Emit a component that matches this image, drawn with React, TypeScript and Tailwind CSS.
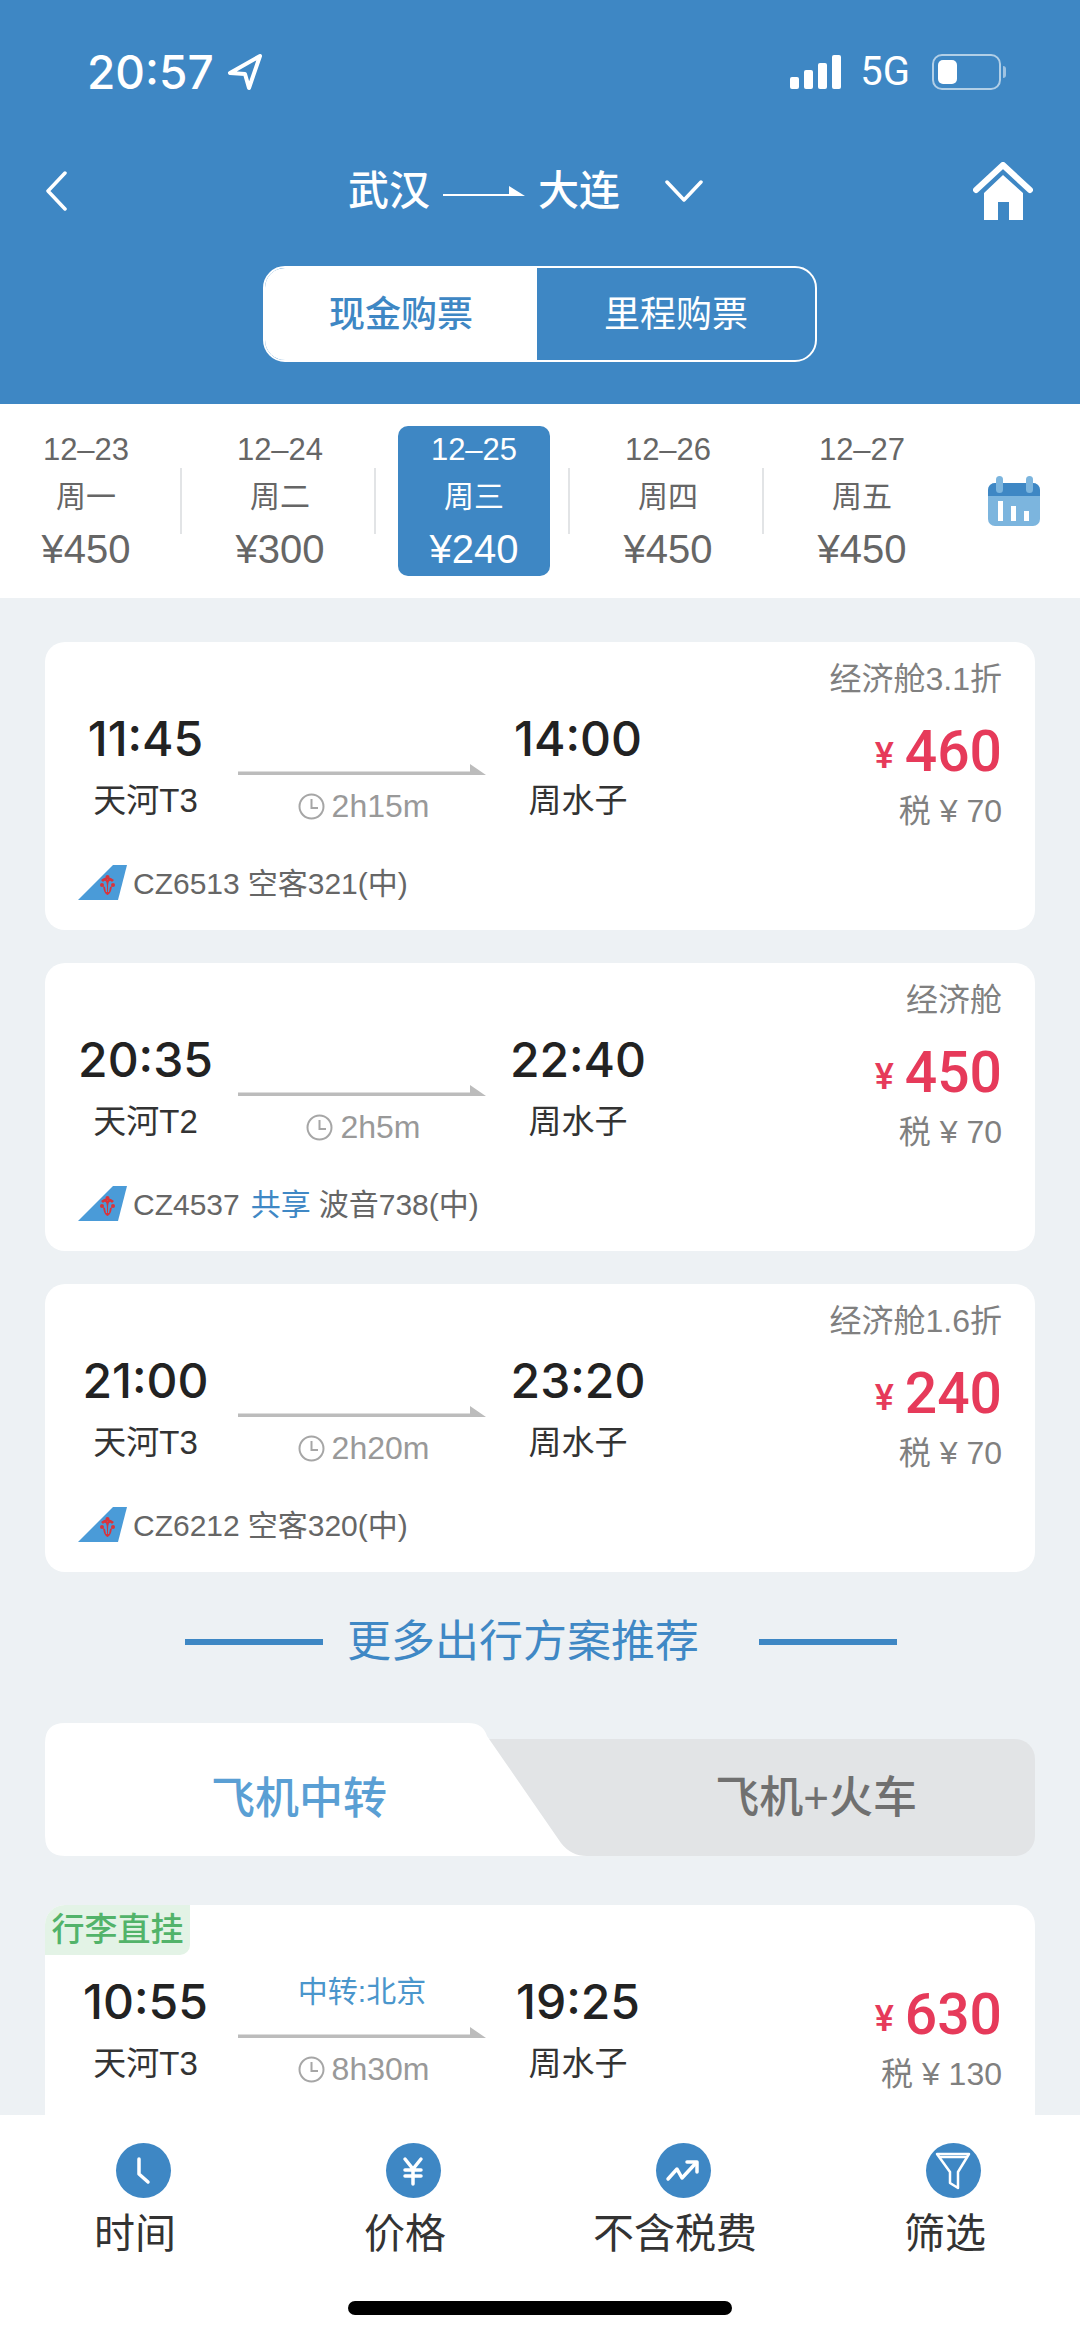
import { ReactNode } from 'react';

type Flight = {
  dep: string;
  from: string;
  dur: string;
  arr: string;
  cabin?: string;
  price: string;
  tax: string;
  code?: string;
  share?: boolean;
  plane?: string;
  via?: string;
  badge?: string;
};

const flights: Flight[] = [
  { dep: '11:45', from: '天河T3', dur: '2h15m', arr: '14:00', cabin: '经济舱3.1折', price: '460', tax: '70', code: 'CZ6513', plane: '空客321(中)' },
  { dep: '20:35', from: '天河T2', dur: '2h5m', arr: '22:40', cabin: '经济舱', price: '450', tax: '70', code: 'CZ4537', share: true, plane: '波音738(中)' },
  { dep: '21:00', from: '天河T3', dur: '2h20m', arr: '23:20', cabin: '经济舱1.6折', price: '240', tax: '70', code: 'CZ6212', plane: '空客320(中)' },
];

const dates = [
  { date: '12–23', week: '周一', price: '¥450' },
  { date: '12–24', week: '周二', price: '¥300' },
  { date: '12–25', week: '周三', price: '¥240', active: true },
  { date: '12–26', week: '周四', price: '¥450' },
  { date: '12–27', week: '周五', price: '¥450' },
];

function TailLogo() {
  return (
    <svg width="50" height="36" viewBox="0 0 50 36" className="shrink-0">
      <path d="M35 0 L49 0 L40 35 L0 35 Z" fill="#4a9bd8" />
      <g fill="#d8343c">
        <path d="M25 17 Q29 13 29 23 Q29 29 29.500 30 Q30 29 30 23 Q30 13 34 17 L36 15 Q30 10 29.500 15 Q29 10 23 15 Z" />
        <circle cx="24" cy="20" r="2" />
        <circle cx="35" cy="20" r="2" />
        <circle cx="29.500" cy="12" r="2" />
        <path d="M25 21 Q26 29 29.500 30 Q33 29 34 21 L32 22 L31 27 L28 27 L27 22 Z" />
      </g>
    </svg>
  );
}

function SmallClock() {
  return (
    <svg width="27" height="27" viewBox="0 0 27 27" fill="none" stroke="#a6a6a6" strokeWidth="2" className="shrink-0">
      <circle cx="13.500" cy="13.500" r="12" />
      <path d="M13.500 6 V15 H20" />
    </svg>
  );
}

function FlightArrow() {
  return (
    <svg width="248" height="12" viewBox="0 0 248 12" className="mt-[15px] block">
      <path d="M0 7.500 H232 V0 L248 11 H0 Z" fill="#bcbcbc" />
    </svg>
  );
}

function FlightCard({ f }: { f: Flight }) {
  return (
    <div className="relative mx-[45px] h-[288px] shrink-0 overflow-hidden rounded-[20px] bg-white pt-[17px]">
      {f.badge && (
        <div className="absolute left-0 top-0 flex h-[50px] w-[145px] items-center justify-center rounded-br-[10px] bg-[#e3f3e6] text-[33px] font-medium text-[#52b36a]">
          {f.badge}
        </div>
      )}
      <div className="flex h-[172px]">
        <div className="ml-[8px] flex w-[185px] flex-col items-center pt-[50px]">
          <div className="h-[60px] font-['Inter'] text-[48px] leading-[60px] font-medium text-[#222222]">{f.dep}</div>
          <div className="mt-[12px] h-[40px] text-[33px] leading-[40px] text-[#333333]">{f.from}</div>
        </div>
        <div className="w-[248px] pt-[50px]">
          <div className="h-[40px] text-center text-[30px] leading-[40px] text-[#4a96cc]">{f.via}</div>
          <FlightArrow />
          <div className="mt-[10px] flex h-[40px] items-center justify-center gap-[7px] pl-[3px] text-[32px] text-[#999999]">
            <SmallClock />
            <span>{f.dur}</span>
          </div>
        </div>
        <div className="flex w-[184px] flex-col items-center pt-[50px]">
          <div className="h-[60px] font-['Inter'] text-[48px] leading-[60px] font-medium text-[#222222]">{f.arr}</div>
          <div className="mt-[12px] h-[40px] text-[33px] leading-[40px] text-[#333333]">周水子</div>
        </div>
        <div className="flex flex-1 flex-col items-end pr-[33px]">
          <div className="h-[40px] text-[32px] leading-[40px] whitespace-nowrap text-[#808080]">{f.cabin}</div>
          <div className="mt-[21px] flex h-[64px] items-center gap-[11px] text-[#e63a5a]">
            <span className="pt-[8px] font-['Roboto'] text-[36px] font-medium">¥</span>
            <span className="font-['Roboto'] text-[57px] leading-[64px] font-medium">{f.price}</span>
          </div>
          <div className="mt-[7px] h-[40px] text-[32px] leading-[40px] whitespace-nowrap text-[#808080]">税 ¥ {f.tax}</div>
        </div>
      </div>
      {f.code && (
        <div className="mt-[32px] ml-[33px] flex h-[40px] items-center gap-[8px] text-[30px] whitespace-nowrap text-[#666666]">
          <TailLogo />
          <span className="-ml-[3px]">{f.code}</span>
          {f.share && <span className="ml-[3px] text-[#3f88c5]">共享</span>}
          <span>{f.plane}</span>
        </div>
      )}
    </div>
  );
}

function ToolItem({ icon, label }: { icon: ReactNode; label: string }) {
  return (
    <div className="flex flex-col items-center">
      <div className="flex h-[55px] w-[55px] items-center justify-center rounded-full bg-[#3e87c4]">{icon}</div>
      <div className="mt-[13px] mr-[16px] h-[46px] text-[41px] leading-[46px] whitespace-nowrap text-[#333333]">{label}</div>
    </div>
  );
}

export default function App() {
  return (
    <div className="flex h-[2337px] w-[1080px] flex-col overflow-hidden bg-[#edf1f4] [font-family:'Liberation_Sans','Noto_Sans_CJK_SC',sans-serif]">
      <header className="shrink-0 bg-[#3e87c4] pt-[50px] pb-[42px] text-white">
        <div className="flex h-[44px] items-center pl-[87px]">
          <span className="font-['Inter'] text-[46px] leading-[44px] font-medium">20:57</span>
          <svg width="36" height="38" viewBox="0 0 36 38" fill="none" stroke="white" strokeWidth="4" strokeLinejoin="round" className="ml-[13px]">
            <path d="M33 3 L3 20 L18 21 L22 35 Z" />
          </svg>
          <div className="ml-auto flex items-end gap-[5px]">
            <div className="h-[12px] w-[9px] rounded-[2px] bg-white" />
            <div className="h-[19px] w-[9px] rounded-[2px] bg-white" />
            <div className="h-[26px] w-[9px] rounded-[2px] bg-white" />
            <div className="h-[34px] w-[9px] rounded-[2px] bg-white" />
          </div>
          <span className="ml-[19px] font-['Roboto'] text-[40px] leading-[44px]">5G</span>
          <div className="ml-[22px] flex h-[36px] w-[69px] items-center rounded-[10px] border-2 border-white/60 p-[4px]">
            <div className="h-full w-[19px] rounded-[5px] bg-white" />
          </div>
          <div className="mr-[74px] ml-[2px] h-[12px] w-[3px] rounded-r bg-white/50" />
        </div>

        <div className="mt-[67px] flex h-[60px] items-center">
          <svg width="23" height="40" viewBox="0 0 23 40" fill="none" stroke="white" strokeWidth="3.500" strokeLinecap="round" strokeLinejoin="round" className="ml-[45px]">
            <path d="M20 2 L3 20 L20 38" />
          </svg>
          <span className="ml-[280px] text-[41px] leading-[60px] font-medium">武汉</span>
          <svg width="82" height="14" viewBox="0 0 82 14" className="ml-[13px]">
            <path d="M0 10 H66 V2 L82 12 H0 Z" fill="white" />
          </svg>
          <span className="ml-[13px] text-[41px] leading-[60px] font-medium">大连</span>
          <svg width="38" height="22" viewBox="0 0 38 22" fill="none" stroke="white" strokeWidth="3.500" strokeLinecap="round" strokeLinejoin="round" className="ml-[45px]">
            <path d="M2 2 L19 20 L36 2" />
          </svg>
          <svg width="60" height="59" viewBox="0 0 60 59" className="mr-[47px] ml-auto">
            <path d="M3 28 L30 3 L57 28" fill="none" stroke="white" strokeWidth="6" strokeLinecap="round" strokeLinejoin="round" />
            <path d="M30 13 L50 31 V58 H36 V40 H25 V58 H11 V31 Z" fill="white" strokeLinejoin="round" />
          </svg>
        </div>

        <div className="mx-auto mt-[45px] flex h-[96px] w-[554px] overflow-hidden rounded-[22px] border-2 border-white">
          <div className="flex w-[272px] items-center justify-center bg-white pt-[2px] text-[36px] font-medium text-[#3e87c4]">现金购票</div>
          <div className="flex flex-1 items-center justify-center pt-[2px] text-[36px] text-white">里程购票</div>
        </div>
      </header>

      <div className="flex h-[194px] shrink-0 items-center bg-white pl-[10px]">
        {dates.map((d, i) => (
          <div key={d.date} className="flex items-center">
            <div className={`flex h-[150px] w-[152px] flex-col items-center rounded-[10px] pt-[4px] ${d.active ? 'bg-[#3e87c4] text-white' : 'text-[#666666]'}`}>
              <div className="h-[40px] text-[31px] leading-[40px]">{d.date}</div>
              <div className="mt-[7px] h-[40px] text-[30px] leading-[40px]">{d.week}</div>
              <div className="mt-[10px] h-[44px] text-[40px] leading-[44px]">{d.price}</div>
            </div>
            {i < 4 && <div className="mr-[22px] ml-[18px] h-[66px] w-[2px] bg-[#e2e4e6]" />}
          </div>
        ))}
        <svg width="52" height="50" viewBox="0 0 52 50" className="ml-[50px]">
          <rect x="0" y="7" width="52" height="43" rx="7" fill="#7cb5de" />
          <path d="M0 20 V14 A7 7 0 0 1 7 7 H45 A7 7 0 0 1 52 14 V20 Z" fill="#3e87c4" />
          <rect x="8" y="0" width="7" height="17" rx="3.500" fill="#7cb5de" />
          <rect x="38" y="0" width="7" height="17" rx="3.500" fill="#7cb5de" />
          <rect x="10" y="25" width="5" height="20" fill="white" />
          <rect x="23" y="30" width="5" height="15" fill="white" />
          <rect x="36" y="35" width="5" height="10" fill="white" />
        </svg>
      </div>

      <main className="flex min-h-0 flex-1 flex-col overflow-hidden pt-[44px]">
        <div className="flex flex-col gap-[33px]">
          {flights.map((f) => (
            <FlightCard key={f.code} f={f} />
          ))}
        </div>

        <div className="mt-[40px] flex h-[60px] shrink-0 items-center pl-[185px] text-[44px] text-[#3f88c5]">
          <div className="h-[6px] w-[138px] bg-[#3e87c4]" />
          <span className="ml-[24px] leading-[60px]">更多出行方案推荐</span>
          <div className="ml-[60px] h-[6px] w-[138px] bg-[#3e87c4]" />
        </div>

        <div className="relative mx-[45px] mt-[51px] h-[133px] shrink-0">
          <div className="absolute inset-x-0 top-[16px] bottom-0 flex items-center justify-end rounded-[20px] bg-[#e2e4e6] pr-[118px] text-[44px] font-medium text-[#707070]">
            飞机+火车
          </div>
          <svg width="560" height="133" viewBox="0 0 560 133" className="absolute top-0 left-0">
            <path d="M20 0 H423 Q438 0 442 13 L 516 120 Q526 133 542 133 H20 Q0 133 0 113 V20 Q0 0 20 0 Z" fill="white" />
          </svg>
          <div className="absolute top-0 left-0 flex h-[133px] w-[508px] items-center justify-center pt-[19px] text-[44px] font-medium text-[#5a9fd4]">
            飞机中转
          </div>
        </div>

        <div className="mt-[49px]">
          <FlightCard f={{ dep: '10:55', from: '天河T3', via: '中转:北京', dur: '8h30m', arr: '19:25', price: '630', tax: '130', badge: '行李直挂' }} />
        </div>
      </main>

      <footer className="relative h-[222px] shrink-0 bg-white">
        <div className="grid grid-cols-[repeat(4,250px)] gap-x-[20px] pt-[28px] pl-[18px]">
          <ToolItem
            label="时间"
            icon={
              <svg width="20" height="30" viewBox="0 0 20 30" fill="none" stroke="white" strokeWidth="3.500" strokeLinecap="round" strokeLinejoin="round">
                <path d="M6 3 V18 L15 26" />
              </svg>
            }
          />
          <ToolItem
            label="价格"
            icon={
              <svg width="24" height="30" viewBox="0 0 24 30" fill="none" stroke="white" strokeWidth="3.500" strokeLinecap="round">
                <path d="M4 3 L12 13 L20 3 M4 14 H20 M4 20 H20 M12 13 V28" />
              </svg>
            }
          />
          <ToolItem
            label="不含税费"
            icon={
              <svg width="36" height="24" viewBox="0 0 36 24" fill="none" stroke="white" strokeWidth="3.500" strokeLinecap="round" strokeLinejoin="round">
                <path d="M3 20 L12 10 L17 19 L30 5" />
                <path d="M22 3 H32 V13" />
              </svg>
            }
          />
          <ToolItem
            label="筛选"
            icon={
              <svg width="36" height="40" viewBox="0 0 36 40" fill="none" stroke="white" strokeWidth="2.500" strokeLinejoin="round">
                <path d="M2 3 H34 L23 21 V37 L15 32 V21 Z" />
                <path d="M4 6 H32" />
              </svg>
            }
          />
        </div>
        <div className="absolute bottom-[22px] left-[348px] h-[14px] w-[384px] rounded-full bg-black" />
      </footer>
    </div>
  );
}
